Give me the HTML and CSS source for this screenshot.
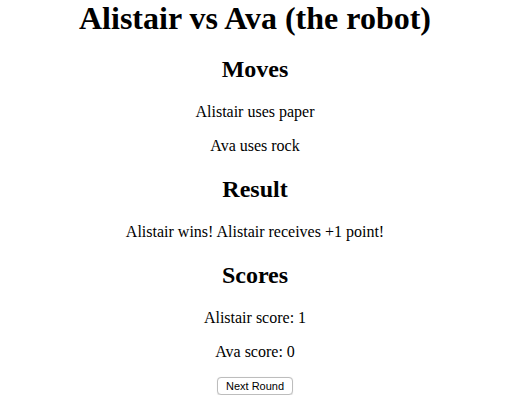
FILE: index.html
```html
<!DOCTYPE html>
<html>
<head>
<meta charset="utf-8">
<link rel="stylesheet" href="styles.css">
</head>
<body>
<div class="game">
  <h1 class="title">Alistair vs Ava (the robot)</h1>
  <h2 class="section">Moves</h2>
  <p class="line">Alistair uses paper</p>
  <p class="line">Ava uses rock</p>
  <h2 class="section">Result</h2>
  <p class="line">Alistair wins! Alistair receives +1 point!</p>
  <h2 class="section">Scores</h2>
  <p class="line">Alistair score: 1</p>
  <p class="line">Ava score: 0</p>
  <button class="next">Next Round</button>
</div>
</body>
</html>
```

FILE: styles.css
```css
html, body {
  margin: 0;
  padding: 0;
  background: #ffffff;
}
body {
  font-family: "Liberation Serif", "Times New Roman", serif;
  color: #000;
}
.game {
  text-align: center;
  padding: 0 13px 0 8px;
}
.title {
  font-size: 32px;
  font-weight: bold;
  margin: 0;
}
.section {
  font-size: 24px;
  font-weight: bold;
  margin: 21px 0 19.92px;
}
.title + .section {
  margin-top: 19px;
}
.line {
  font-size: 16px;
  margin: 16px 0;
}
.next {
  display: block;
  margin: 0 auto;
  font-family: "Liberation Sans", Arial, sans-serif;
  font-size: 11px;
  color: #000;
  background: #ffffff;
  border: 1px solid #bdbdbd;
  border-radius: 4px;
  padding: 0 8px;
  height: 18px;
  line-height: 16px;
  box-shadow: 0 0.5px 1px rgba(0, 0, 0, 0.12);
}
```
